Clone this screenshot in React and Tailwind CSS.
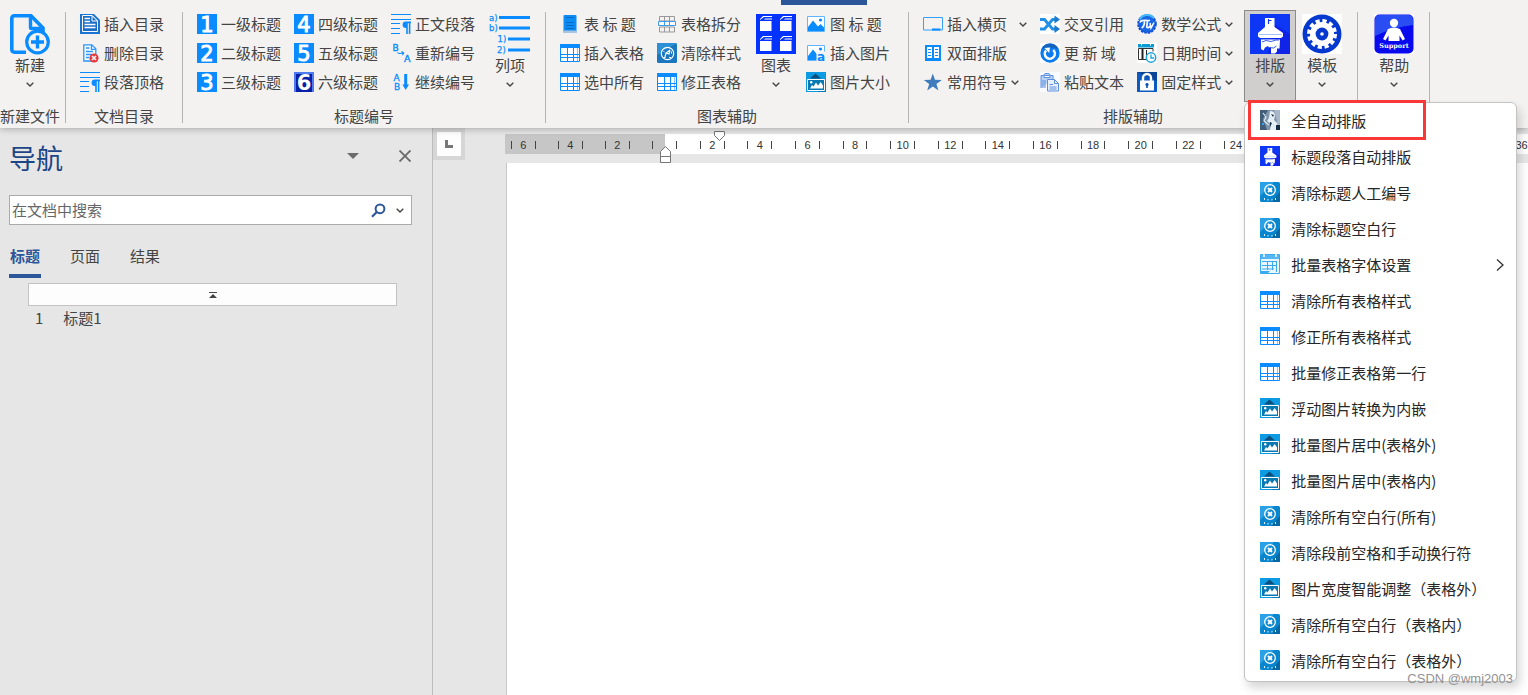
import React from "react";

const BLUE = "#0a8bff";

function Chevron({ className = "" }) {
  return (
    <svg className={`h-[5px] w-2 shrink-0 ${className}`} viewBox="0 0 8 5" fill="none" aria-hidden="true">
      <path d="M0.7 0.7 4 4 7.3 0.7" stroke="#444" strokeWidth="1.4" />
    </svg>
  );
}

function Svg({ big, children }) {
  return (
    <svg
      className={big ? "size-10 shrink-0 overflow-visible" : "size-5 shrink-0 overflow-visible"}
      viewBox={big ? "0 0 40 40" : "0 0 20 20"}
      fill="none"
      aria-hidden="true"
    >
      {children}
    </svg>
  );
}

function NewIcon() {
  return (
    <Svg big>
      <path d="M16 38.2H4.5A2.8 2.8 0 0 1 1.8 35.5V4.5A2.8 2.8 0 0 1 4.5 1.8H21L33 14v6" stroke={BLUE} strokeWidth="3.6" />
      <path d="M20.5 2v11.5a1 1 0 0 0 1 1H33" stroke={BLUE} strokeWidth="3.4" />
      <circle cx="27.5" cy="28" r="10.8" fill="#f3f2f1" stroke={BLUE} strokeWidth="3.2" />
      <path d="M27.5 21.5v13M21 28h13" stroke={BLUE} strokeWidth="3.4" />
    </Svg>
  );
}

function TocIcon() {
  return (
    <Svg>
      <path d="M0 0h20v20H0z" fill="#1c74d2" />
      <path d="M14 0h6v6z" fill="#f3f2f1" />
      <path d="M2.500 17.500V1.500H12L17.500 7v10.500z" fill="#1c6fc9" stroke="#fff" />
      <path d="M12 1.500V7h5.500z" fill="#1c6fc9" stroke="#fff" />
      <path d="M4.500 4.500H10M4.500 7.500H10M4.500 10.500h11M4.500 13.500h11" stroke="#fff" strokeWidth="1.300" />
    </Svg>
  );
}

function DeleteTocIcon() {
  return (
    <Svg>
      <path d="M3.8 1.8h8l4 4V18h-12z" fill="#f8fcff" stroke="#2a96ff" strokeWidth="1.3" />
      <path d="M11.5 1.8v4.5H16" stroke="#2a96ff" strokeWidth="1.3" />
      <path d="M6 5h3.5M6 8.5h7M6 11.5h6M6 14.5h3" stroke="#2a96ff" strokeWidth="1.4" />
      <circle cx="14" cy="15" r="4.6" fill="#e5393c" />
      <path d="m12 13 4 4m0-4-4 4" stroke="#fff" strokeWidth="1.5" />
    </Svg>
  );
}

function ParagraphIcon() {
  return (
    <Svg>
      <path d="M0 .5h20M0 5.500h20M0 9.500h9M0 14.500h9M0 19.500h9" stroke={BLUE} />
      <path d="M20 7.6h-5.2a3.2 3.2 0 0 0 0 6.4h.4v6h1.6V9.2h1V20h1.6V9.2H20z" fill={BLUE} />
    </Svg>
  );
}

function NumberIcon({ n, dark }) {
  return (
    <Svg>
      <path d="M0 0h20v20H0z" fill={dark ? "#4f7bf2" : BLUE} />
      {dark && <path d="M2 2h16v18H2z" fill="#0a1fa8" />}
      <text
        x="10"
        y="17.500"
        textAnchor="middle"
        fontSize="21"
        fontWeight={dark ? "bold" : "normal"}
        fill="#fff"
        stroke="#fff"
        strokeWidth={dark ? "0" : ".9"}
        fontFamily="DejaVu Sans, sans-serif"
      >
        {n}
      </text>
    </Svg>
  );
}

const tiny = "DejaVu Sans, sans-serif";

function RenumberIcon() {
  return (
    <Svg>
      <text x="1.500" y="8" fontSize="9" fill={BLUE} stroke={BLUE} strokeWidth=".4" fontFamily={tiny}>B</text>
      <text x="13" y="19" fontSize="9.500" fill={BLUE} stroke={BLUE} strokeWidth=".4" fontFamily={tiny}>A</text>
      <path d="M6.5 9.500c1 1.300 2.500 1.300 5.500.5M10.500 8.500l2.200 1.500-1.200 2.200" stroke={BLUE} strokeWidth="1.100" />
    </Svg>
  );
}

function ContinueIcon() {
  return (
    <Svg>
      <text x="2.500" y="8.500" fontSize="9" fill={BLUE} stroke={BLUE} strokeWidth=".3" fontFamily={tiny}>A</text>
      <text x="3" y="18" fontSize="9" fill={BLUE} stroke={BLUE} strokeWidth=".3" fontFamily={tiny}>B</text>
      <path d="M13.200 2h3v10.500H18L14.700 18l-3.300-5.500h1.800z" fill={BLUE} />
    </Svg>
  );
}

function ListIcon() {
  return (
    <Svg big>
      <text x="-1" y="6.500" fontSize="8.500" fill={BLUE} stroke={BLUE} strokeWidth=".25" fontFamily={tiny}>a)</text>
      <text x="-1" y="17" fontSize="8.500" fill={BLUE} stroke={BLUE} strokeWidth=".25" fontFamily={tiny}>b)</text>
      <text x="7.500" y="28" fontSize="8.500" fill={BLUE} stroke={BLUE} strokeWidth=".25" fontFamily={tiny}>1)</text>
      <text x="7" y="39" fontSize="8.500" fill={BLUE} stroke={BLUE} strokeWidth=".25" fontFamily={tiny}>2)</text>
      <path d="M9 3.500h31M9 14h31M18 25h22M18 36h22" stroke={BLUE} strokeWidth="2.800" />
    </Svg>
  );
}

function TableCaptionIcon() {
  return (
    <Svg>
      <rect x="3.500" y="1" width="13" height="18" rx="1" fill="#0d8bf5" />
      <rect x="3.500" y="16.500" width="13" height="2.500" fill="#a9c4de" />
      <path d="M6 3.500h8M6 8.500h8M6 11.500h8M6 14.500h8" stroke="#0b62b8" strokeWidth=".8" />
    </Svg>
  );
}

function TableIcon() {
  return (
    <Svg>
      <path d="M.5 1.500h19v17H.5z" fill="#fff" stroke={BLUE} />
      <path d="M0 1h20v4H0z" fill={BLUE} />
      <path d="M.5 11.500h19M.5 14.500h19M7.500 5v13.500M13.500 5v13.500" stroke={BLUE} />
      <path d="M17.500 5v13.500" stroke={BLUE} strokeOpacity=".5" />
    </Svg>
  );
}

function SplitTableIcon() {
  return (
    <Svg>
      <path d="M2.500 7V2.500h15V7zM7.500 2.500V7m5-4.500V7M2.500 13v5h15v-5zM7.500 13v5m5-5v5" stroke="#999" />
      <path d="M1.500 7.500h17v4h-17zM7.500 7.500v4m5-4v4" stroke="#3c9cf0" fill="#fff" />
    </Svg>
  );
}

function ClearStyleIcon() {
  return (
    <Svg>
      <rect width="20" height="20" rx="1.500" fill="#1976bf" />
      <path d="M0 0h20L0 12z" fill="#2d8fd6" />
      <circle cx="10.500" cy="10.500" r="6.200" stroke="#fff" strokeWidth="1.200" />
      <path d="m8 14 1-4 4-3M9 10l3 1 1-4" stroke="#fff" strokeWidth="1.200" />
      <path d="M6.500 14.500h2M12 14.500h2M6.500 8.500l1 .5M14.500 8.500v2" stroke="#fff" />
    </Svg>
  );
}

function ChartGridIcon() {
  return (
    <Svg big>
      <path d="M0 0h40v40H0z" fill="#0433ff" />
      {[[4, 2], [24, 2], [4, 22], [24, 22]].map(([x, y]) => (
        <g key={`${x}-${y}`} transform={`translate(${x} ${y})`}>
          <path d="M0 5h11.500v10H0zM3 0h9v1H4L0 4V3z" fill="#fff" />
          <path d="M5 2.500h7v1H4z" fill="#fff" />
        </g>
      ))}
    </Svg>
  );
}

function PictureIcon({ letter }) {
  return (
    <Svg>
      <path d="M1.500 2.500h17v15h-17z" fill="#fff" stroke="#62b5ff" />
      <path d="M2 13 7 6.500l5 6 2.500-2.500L18 13.500V17H2z" fill={BLUE} />
      <circle cx="14.500" cy="6" r="1.600" fill={BLUE} />
      {letter && (
        <>
          <path d="M10.500 8.500H20V20h-9.500z" fill="#f3f2f1" />
          <text x="11" y="18" fontSize="12" fontWeight="bold" fill={BLUE} fontFamily={tiny}>a</text>
        </>
      )}
    </Svg>
  );
}

function FramedPictureIcon() {
  return (
    <Svg>
      <path d="M0 0h20v20H0z" fill="#0c9ae2" />
      <path d="M9.500 1.500 15 6.500H4z" fill="#0a4f7c" />
      <path d="m15 6.500 5 4V20h-8z" fill="#057bb9" />
      <path d="M1.500 7.500h17v11h-17z" fill="#0979b4" stroke="#fff" />
      <path d="m4 16.500 2-3.500 1.500 1.500L10 10.500l2 3 2.700-3.500 2.300 3.500v3z" fill="#fff" />
      <circle cx="5.200" cy="10.200" r="1.200" fill="#fff" />
    </Svg>
  );
}

function LandscapeIcon() {
  return (
    <Svg>
      <path d="M.5 3.500h19v12.500H.5z" stroke="#35a0ff" />
      <path d="M9 14.500h8.500v2H9z" fill={BLUE} />
    </Svg>
  );
}

function DuplexIcon() {
  return (
    <Svg>
      <path d="M2 2h16v16H2z" fill={BLUE} />
      <path d="M4 4h5v11H4zM11 4h5v11h-5z" fill="#fff" />
      <path d="M5 6.500h3m-3 3h3m-3 3h3m4-6h3m-3 3h3m-3 3h3" stroke={BLUE} />
    </Svg>
  );
}

function StarIcon() {
  return (
    <Svg>
      <path d="m9.800 1.500 2.200 6.300 6.800.1-5.400 4 2 6.600-5.600-3.900-5.600 3.900 2-6.600-5.400-4 6.800-.1z" fill="#3f7bbd" />
    </Svg>
  );
}

function ShuffleIcon() {
  return (
    <Svg>
      <path d="M0 0h20v20H0z" fill="#fff" />
      <path d="M0 5.500h4.500l8 9.500H16M0 15h4.500l8-9.500H16" stroke="#2090e6" strokeWidth="2.800" />
      <path d="m14.500 1.500 5.500 4-5.500 4zM14.500 11l5.500 4-5.500 4z" fill="#1a79d0" />
    </Svg>
  );
}

function RefreshIcon() {
  return (
    <Svg>
      <path d="M0 0h20v20H0z" fill="#fff" />
      <circle cx="10" cy="10" r="9.700" fill="#0b7cf0" />
      <path d="M1.500 6a9.500 9.500 0 0 1 17 0q-8-3-17 0z" fill="#1763bd" />
      <path d="M6 7.500A5 5 0 1 0 13.200 7" stroke="#fff" strokeWidth="2.500" />
      <path d="m4.500 5 5.500-.5-.8 5.500z" fill="#fff" />
    </Svg>
  );
}

function PasteIcon() {
  return (
    <Svg>
      <path d="M0 0h20v20H0z" fill="#f8fbff" />
      <path d="M1 16V3.500h2.500L5 1.500h4l1.500 2H13V7" fill="#b8d3f5" stroke="#5c8fdc" />
      <path d="M4 3.500h6v2H4z" fill="#fff" stroke="#5c8fdc" />
      <path d="M7.500 7.500h7l4 4v7.500h-11z" fill="#e7f0fd" stroke="#5c8fdc" />
      <path d="M14.500 7.500v4h4M9.500 12.500H13m-3.500 2.500h7m-7 2h7M3 8v8m2-8v8" stroke="#5c8fdc" />
    </Svg>
  );
}

function FormulaIcon() {
  return (
    <Svg>
      <circle cx="10" cy="10" r="8.800" fill="#1668e6" stroke="#1450d0" strokeWidth="2" strokeDasharray="2.500 1" />
      <path d="M2.500 5.500A9 9 0 0 1 17 4" stroke="#45b8ff" strokeWidth="2" />
      <path d="M3 8.500C4 6 6 6.500 13 6.500M7.500 7c0 4-1 6-2.800 7M10.500 7l-.8 6c1 1.500 3 0 3.500-1" stroke="#fff" strokeWidth="1.700" />
      <path d="m13 9 1 5 3-5.500" stroke="#fff" strokeWidth="1.500" />
    </Svg>
  );
}

function DateIcon() {
  return (
    <Svg>
      <path d="M0 0h20v20H0z" fill="#fff" />
      <path d="M1 1h16v3.500H1z" fill="#0b9bd4" />
      <path d="M4.500 0v2.500M13.500 0v2.500" stroke="#fff" />
      <path d="M1.500 5.500h14.500v3M1.500 5.500v11H9" stroke="#333" />
      <path d="M5.500 6v10" stroke="#222" strokeWidth="2" />
      <path d="M9.500 7v5" stroke="#222" />
      <circle cx="14" cy="14.500" r="4.700" fill="#fff" stroke="#1aa2dc" strokeWidth="1.500" />
      <path d="M14 11.500v3.500h3" stroke="#1aa2dc" strokeWidth="1.300" />
    </Svg>
  );
}

function LockIcon() {
  return (
    <Svg>
      <path d="M0 0h20v20H0z" fill="#0d5bc0" />
      <path d="M0 0h20v9z" fill="#0a4497" />
      <path d="M6 9V6a4 4 0 0 1 8 0v3" stroke="#fff" strokeWidth="2.400" />
      <path d="M3 8.500h14V18.500H3z" fill="#fff" />
      <path d="M10 11a1.600 1.600 0 0 1 .8 3v2H9.200v-2a1.600 1.600 0 0 1 .8-3z" fill="#0d4fae" />
    </Svg>
  );
}

function BrushIcon({ small }) {
  return (
    <svg className={small ? "size-5 shrink-0" : "size-10 shrink-0"} viewBox="0 0 40 40" fill="none" aria-hidden="true">
      <path d="M0 0h40v40H0z" fill="#0d37f5" />
      <path d="m24 10 16 10v20H18z" fill="#1024e8" />
      <path d="M15 4h9.500v9L33 19v3.500l-2 1.500H10l-2-1.500V19l7-6z" fill="#fff" />
      <path d="M18.500 5v5m0-3.500h3" stroke="#0d37f5" strokeWidth="1.200" />
      <path d="M9 20.500h23" stroke="#8fb0ff" strokeWidth=".8" />
      <path d="M11 25.500h19l-.5 9H27v3l-2 2h-4v-6h-2l-1-1.500-3 1.500-1.500 3L11 35z" fill="#fff" />
      <path d="m12 28 4-1.500 5 1 5-1.500h3M19.500 33.500l4 .5 3-2" stroke="#214bea" strokeWidth=".9" />
    </svg>
  );
}

function GearIcon() {
  return (
    <Svg big>
      <path d="M0 0h40v40H0z" fill="#fff" />
      <circle cx="20" cy="20" r="19.500" fill="#0538cf" />
      <circle cx="20" cy="20" r="12" fill="#fff" />
      <circle cx="20" cy="20" r="13" stroke="#fff" strokeWidth="4" strokeDasharray="4.100 2.707" />
      <circle cx="20" cy="20" r="6.400" fill="#0538cf" />
      <circle cx="20" cy="20" r="1.800" fill="#fff" />
    </Svg>
  );
}

function SupportIcon() {
  return (
    <Svg big>
      <path d="M0 0h40v40H0z" fill="#fff" />
      <rect x=".5" y=".5" width="39" height="39" rx="5" fill="#0909ed" />
      <path d="M1 6q0-5 5-5h28q5 0 5 5v5Q20 13 1 22z" fill="#2a4cf3" />
      <circle cx="20" cy="9" r="4.200" fill="#fff" />
      <path d="M14 15q6-3 12 0l5 10-2.500 1.500-3-5V27H14.500v-5.500l-3 5L9 25z" fill="#fff" />
      <text x="20" y="33.500" textAnchor="middle" fontSize="6.500" fontWeight="bold" fill="#fff" fontFamily="DejaVu Serif, serif">Support</text>
    </Svg>
  );
}

function RobotIcon() {
  return (
    <Svg>
      <path d="M0 0h20v20H0z" fill="#8095ab" />
      <path d="M0 0h8L3 9l4 11H0z" fill="#415d78" />
      <path d="M14 0h6v20h-4l1-9z" fill="#a8b7c8" />
      <path d="M10 1q5 0 5 5l-1 4 3 3 1 7h-8l1-6-4-3 2-3z" fill="#e8f0f6" />
      <path d="M3 3 6 7 4 11l5 4M10 8l3 2M13 14l2 5" stroke="#d8e9f5" strokeWidth="1.200" />
      <path d="m11 4 3 1-1 2zM10 12l2 1-2 4zM16 15h4v5h-4z" fill="#182c43" />
      <path d="M2 13h2v2H2zM5 4h1v2H5z" fill="#37a4e6" />
    </Svg>
  );
}

function ClearIcon() {
  return (
    <Svg>
      <rect width="20" height="20" rx="1.500" fill="#0986ce" />
      <path d="M0 0h14L0 14z" fill="#2aa1e6" />
      <path d="m20 10-9 10h9z" fill="#0468a9" />
      <circle cx="10" cy="8" r="5.300" stroke="#fff" strokeWidth="1.300" />
      <path d="m8 6 4 4m0-4-4 4" stroke="#fff" strokeWidth="2" />
      <path d="M4.500 16v2M8 17v1.500M12 17v1.500M15.500 16v2" stroke="#d8efff" strokeWidth="1" />
    </Svg>
  );
}

function TableFontIcon() {
  return (
    <Svg>
      <path d="M.5.500h19v19H.5z" fill="#e8f6ff" stroke="#3aaaf0" />
      <path d="M1 1h18v4H1z" fill="#55b8f5" />
      <path d="M4 0v3M16 0v3" stroke="#fff" strokeWidth="1.500" />
      <path d="M2 7.500h15M2 11.500h15M2 15h12M7.500 7v9M12.500 7v9M16.500 7v11" stroke="#3aaaf0" />
      <path d="M1 17h9l-2 2H1z" fill="#3aaaf0" />
    </Svg>
  );
}

function RibbonButton({ icon, label, menu, spread }) {
  return (
    <button type="button" className="flex h-7 items-center gap-1 text-left whitespace-pre">
      {icon}
      <span>{label}</span>
      {menu && <Chevron className={spread ? "ml-auto" : ""} />}
    </button>
  );
}

function Column({ children, className = "" }) {
  return <div className={`flex flex-col gap-px ${className}`}>{children}</div>;
}

function BigButton({ icon, label, menu = true, active }) {
  return (
    <button
      type="button"
      aria-expanded={active ? true : undefined}
      className={`flex h-[92px] w-[52px] flex-col items-center border pt-[3px] ${
        active ? "border-[#8c8b8a] bg-[#d0cfce]" : "border-transparent"
      }`}
    >
      {icon}
      <span className="mt-px leading-5">{label}</span>
      {menu && <Chevron className="mt-[7px]" />}
    </button>
  );
}

function Group({ title, className = "", bodyClass = "", children }) {
  return (
    <>
      <section className={`flex shrink-0 flex-col pt-2.5 pb-0.5 ${className}`}>
        <div className={`flex h-[92px] ${bodyClass}`}>{children}</div>
        <h2 className="mt-1 h-5 text-center leading-5 whitespace-nowrap">{title}</h2>
      </section>
      <div className="mt-3 mb-[5px] w-px shrink-0 bg-[#b5b4b3]" />
    </>
  );
}

const menuItems = [
  ["全自动排版", <RobotIcon />],
  ["标题段落自动排版", <BrushIcon small />],
  ["清除标题人工编号", <ClearIcon />],
  ["清除标题空白行", <ClearIcon />],
  ["批量表格字体设置", <TableFontIcon />, true],
  ["清除所有表格样式", <TableIcon />],
  ["修正所有表格样式", <TableIcon />],
  ["批量修正表格第一行", <TableIcon />],
  ["浮动图片转换为内嵌", <FramedPictureIcon />],
  ["批量图片居中(表格外)", <FramedPictureIcon />],
  ["批量图片居中(表格内)", <FramedPictureIcon />],
  ["清除所有空白行(所有)", <ClearIcon />],
  ["清除段前空格和手动换行符", <ClearIcon />],
  ["图片宽度智能调整（表格外）", <FramedPictureIcon />],
  ["清除所有空白行（表格内）", <ClearIcon />],
  ["清除所有空白行（表格外）", <ClearIcon />],
];

function LayoutMenu() {
  return (
    <div
      role="menu"
      className="absolute top-[92px] left-0 z-10 w-[273px] rounded-md border border-[#c3c3c3] bg-white pb-0.5 text-[#262626] shadow-[3px_6px_10px_rgba(0,0,0,0.16)]"
    >
      {menuItems.map(([label, icon, sub]) => (
        <button key={label} type="button" role="menuitem" className="flex h-9 w-full items-center gap-[11px] pr-3 pl-[15px] text-left whitespace-nowrap">
          <span className="shrink-0 pb-0.5">{icon}</span>
          <span>{label}</span>
          {sub && (
            <svg className="ml-auto h-3 w-2" viewBox="0 0 8 12" fill="none" aria-hidden="true">
              <path d="m1 .5 6 5.500-6 5.500" stroke="#333" strokeWidth="1.300" />
            </svg>
          )}
        </button>
      ))}
      <div className="pointer-events-none absolute -top-[3px] left-[3px] h-10 w-[178px] border-3 border-[#fa3838]" />
    </div>
  );
}

function Ribbon() {
  return (
    <header className="relative z-10 flex bg-[#f3f2f1] text-[#444] shadow-[0_1px_7px_rgba(0,0,0,0.28)]">
      <div className="absolute top-0 left-[781px] h-[5px] w-[86px] bg-[#2b579a]" />

      <Group title="新建文件" className="w-[65px] pr-[5px]" bodyClass="justify-center">
        <BigButton icon={<NewIcon />} label="新建" />
      </Group>

      <Group title="文档目录" bodyClass="pl-3.5 pr-[18px]">
        <Column>
          <RibbonButton icon={<TocIcon />} label="插入目录" />
          <RibbonButton icon={<DeleteTocIcon />} label="删除目录" />
          <RibbonButton icon={<ParagraphIcon />} label="段落顶格" />
        </Column>
      </Group>

      <Group title="标题编号" bodyClass="gap-[13px] pl-3.5 pr-[9px]">
        <Column>
          <RibbonButton icon={<NumberIcon n="1" />} label="一级标题" />
          <RibbonButton icon={<NumberIcon n="2" />} label="二级标题" />
          <RibbonButton icon={<NumberIcon n="3" />} label="三级标题" />
        </Column>
        <Column>
          <RibbonButton icon={<NumberIcon n="4" />} label="四级标题" />
          <RibbonButton icon={<NumberIcon n="5" />} label="五级标题" />
          <RibbonButton icon={<NumberIcon n="6" dark />} label="六级标题" />
        </Column>
        <div className="flex gap-[9px]">
          <Column>
            <RibbonButton icon={<ParagraphIcon />} label="正文段落" />
            <RibbonButton icon={<RenumberIcon />} label="重新编号" />
            <RibbonButton icon={<ContinueIcon />} label="继续编号" />
          </Column>
          <BigButton icon={<ListIcon />} label="列项" />
        </div>
      </Group>

      <Group title="图表辅助" bodyClass="gap-[13px] pl-3.5 pr-[18px]">
        <Column>
          <RibbonButton icon={<TableCaptionIcon />} label="表 标 题" />
          <RibbonButton icon={<TableIcon />} label="插入表格" />
          <RibbonButton icon={<TableIcon />} label="选中所有" />
        </Column>
        <div className="flex">
          <Column>
            <RibbonButton icon={<SplitTableIcon />} label="表格拆分" />
            <RibbonButton icon={<ClearStyleIcon />} label="清除样式" />
            <RibbonButton icon={<TableIcon />} label="修正表格" />
          </Column>
          <div className="flex gap-1 pl-[9px]">
            <BigButton icon={<ChartGridIcon />} label="图表" />
            <Column>
              <RibbonButton icon={<PictureIcon />} label="图 标 题" />
              <RibbonButton icon={<PictureIcon letter />} label="插入图片" />
              <RibbonButton icon={<FramedPictureIcon />} label="图片大小" />
            </Column>
          </div>
        </div>
      </Group>

      <Group title="排版辅助" bodyClass="gap-[13px] pl-3.5 pr-[9px]">
        <Column className="w-[104px]">
          <RibbonButton icon={<LandscapeIcon />} label="插入横页" menu spread />
          <RibbonButton icon={<DuplexIcon />} label="双面排版" />
          <RibbonButton icon={<StarIcon />} label="常用符号" menu />
        </Column>
        <Column>
          <RibbonButton icon={<ShuffleIcon />} label="交叉引用" />
          <RibbonButton icon={<RefreshIcon />} label="更 新 域" />
          <RibbonButton icon={<PasteIcon />} label="粘贴文本" />
        </Column>
        <div className="flex gap-[11px]">
          <Column>
            <RibbonButton icon={<FormulaIcon />} label="数学公式" menu />
            <RibbonButton icon={<DateIcon />} label="日期时间" menu />
            <RibbonButton icon={<LockIcon />} label="固定样式" menu />
          </Column>
          <div className="relative flex">
            <BigButton icon={<BrushIcon />} label="排版" active />
            <BigButton icon={<GearIcon />} label="模板" />
            <LayoutMenu />
          </div>
        </div>
      </Group>

      <Group title="" bodyClass="pl-2.5 pr-[9px]">
        <BigButton icon={<SupportIcon />} label="帮助" />
      </Group>
    </header>
  );
}

function NavigationPane() {
  return (
    <aside className="flex w-[433px] shrink-0 flex-col border-r border-[#bcbcbc] pr-5 pl-[9px] text-[#444]">
      <div className="flex h-14 items-center pr-px">
        <h1 className="pt-1 text-[27px] leading-10 text-[#1c4587]">导航</h1>
        <button type="button" aria-label="窗格选项" className="ml-auto">
          <svg className="h-1.5 w-3" viewBox="0 0 12 6" aria-hidden="true"><path d="M0 0h12L6 6z" fill="#6b6b6b" /></svg>
        </button>
        <button type="button" aria-label="关闭" className="ml-10">
          <svg className="size-3" viewBox="0 0 12 12" aria-hidden="true"><path d="m.5.500 11 11m0-11-11 11" stroke="#6b6b6b" strokeWidth="1.900" /></svg>
        </button>
      </div>
      <div className="mt-[11px] flex h-[30px] items-center border border-[#ababab] bg-white pr-[7px]">
        <input
          type="search"
          aria-label="在文档中搜索"
          placeholder="在文档中搜索"
          className="min-w-0 flex-1 bg-transparent pl-0.5 outline-none placeholder:text-[#666]"
        />
        <button type="button" aria-label="搜索">
          <svg className="size-[15px]" viewBox="0 0 15 15" fill="none" aria-hidden="true">
            <circle cx="9" cy="5.800" r="4.400" stroke="#2b579a" strokeWidth="2" />
            <path d="M5.800 9 1 13.800" stroke="#2b579a" strokeWidth="2.200" />
          </svg>
        </button>
        <button type="button" aria-label="搜索选项" className="ml-2.5"><Chevron /></button>
      </div>
      <div role="tablist" className="mt-[19px] flex gap-7">
        <button type="button" role="tab" aria-selected="true" className="flex h-[34px] w-8 justify-center border-b-4 border-[#2b579a] leading-6 font-bold whitespace-nowrap text-[#2b579a]">标题</button>
        <button type="button" role="tab" aria-selected="false" className="flex h-[34px] w-8 justify-center leading-6 whitespace-nowrap">页面</button>
        <button type="button" role="tab" aria-selected="false" className="flex h-[34px] w-8 justify-center leading-6 whitespace-nowrap">结果</button>
      </div>
      <button type="button" aria-label="跳转到开头" className="mt-[5px] mr-[15px] ml-[19px] flex h-[23px] items-center justify-center border border-[#c3c3c3] bg-[#fdfdfd]">
        <svg className="h-1.5 w-2" viewBox="0 0 8 6" aria-hidden="true"><path d="M0 0h8v1H0zM4 2l4 4H0z" fill="#444" /></svg>
      </button>
      <a href="#heading-1" className="flex h-6 items-center gap-5 pl-[26px]">
        <span>1</span>
        <span>标题1</span>
      </a>
    </aside>
  );
}

function Tick() {
  return <span className="h-2 w-px shrink-0 bg-[#444]" />;
}

function RulerCell({ value, valueFirst }) {
  const number = <span className="flex w-0 flex-1 justify-center">{value}</span>;
  const space = <span className="w-0 flex-1" />;
  return (
    <div className="flex w-0 flex-1 items-center">
      <Tick />
      {valueFirst ? number : space}
      <Tick />
      {valueFirst ? space : number}
    </div>
  );
}

function Ruler() {
  return (
    <div className="relative mt-[6px] ml-10 flex h-5 flex-1 font-['Liberation_Sans'] text-[11px] leading-5 text-[#333]">
      <div className="flex w-[160px] shrink-0 items-center bg-[#c6c6c6] pt-0.5 pr-3 pl-1.5">
        {[6, 4, 2].map((n) => <RulerCell key={n} value={n} valueFirst />)}
        <Tick />
      </div>
      <div className="flex flex-1 overflow-hidden bg-white pt-0.5">
        <div className="-mr-[5px] ml-[11px] flex flex-1">
          {Array.from({ length: 18 }, (_, i) => {
            const value = 2 * i + 2;
            const covered = value > 24 && value < 36;
            return <RulerCell key={value} value={covered ? null : value} />;
          })}
        </div>
      </div>
      <svg className="absolute top-3 left-[155px] h-[17px] w-[11px]" viewBox="0 0 11 17" aria-hidden="true">
        <path d="M.5 16.500v-11l5-5 5 5v11zM.5 10.500h10" fill="#fff" stroke="#777" />
      </svg>
      <svg className="absolute -top-[3px] left-[209px] h-2.5 w-[11px]" viewBox="0 0 11 10" aria-hidden="true">
        <path d="M.5.500h10v4l-5 5-5-5z" fill="#fff" stroke="#777" />
      </svg>
    </div>
  );
}

function DocumentArea() {
  return (
    <main className="flex min-w-0 flex-1 flex-col">
      <div className="flex h-[35px] items-start">
        <button type="button" aria-label="制表符" className="flex size-8 shrink-0 items-center justify-center border-4 border-[#d6d6d6] bg-[#fdfdfd]">
          <svg className="size-2" viewBox="0 0 8 8" aria-hidden="true"><path d="M0 0h3v5h5v3H0z" fill="#777" /></svg>
        </button>
        <Ruler />
      </div>
      <div className="ml-[73px] flex-1 border-l border-[#c6c6c6] bg-white" />
    </main>
  );
}

export default function App() {
  return (
    <div className="relative flex min-h-screen flex-col overflow-hidden bg-[#e6e6e6] font-['Noto_Sans_CJK_SC',sans-serif] text-[15px]">
      <Ribbon />
      <div className="flex flex-1">
        <NavigationPane />
        <DocumentArea />
      </div>
      <div className="pointer-events-none absolute right-[15px] bottom-2 z-20 font-['Liberation_Sans'] text-[13px] leading-4 text-[#929292]">
        CSDN @wmj2003
      </div>
    </div>
  );
}
